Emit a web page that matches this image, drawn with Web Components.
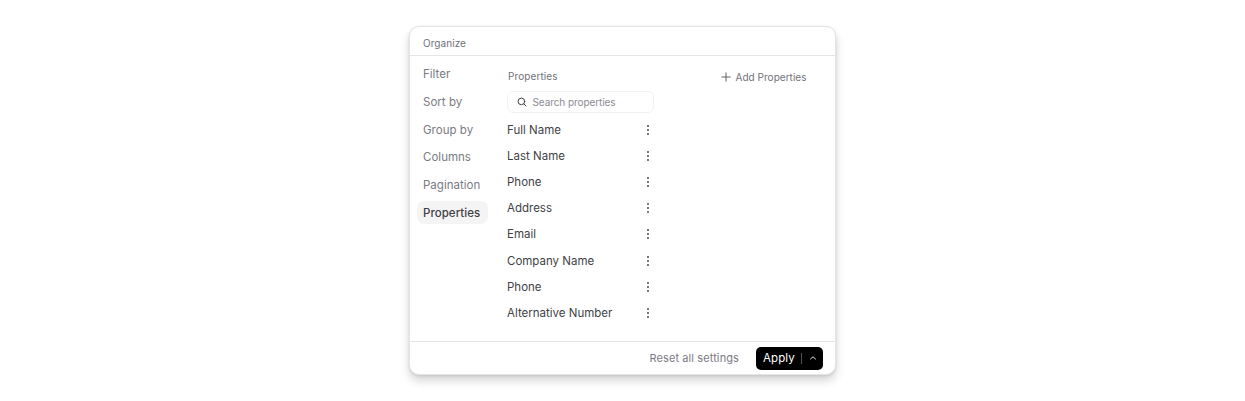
<!doctype html>
<html><head><meta charset="utf-8"><style>
html,body{margin:0;background:#fff;}
body{height:401px;overflow:hidden;font-family:Inter,"Liberation Sans",sans-serif;display:flex;justify-content:center;align-items:flex-start;padding-top:26px;box-sizing:border-box;}
</style></head><body>
<organize-panel>
  <side-item>Filter</side-item>
  <side-item>Sort by</side-item>
  <side-item>Group by</side-item>
  <side-item>Columns</side-item>
  <side-item>Pagination</side-item>
  <side-item active>Properties</side-item>
  <prop-row slot="rows">Full Name</prop-row>
  <prop-row slot="rows">Last Name</prop-row>
  <prop-row slot="rows">Phone</prop-row>
  <prop-row slot="rows">Address</prop-row>
  <prop-row slot="rows">Email</prop-row>
  <prop-row slot="rows">Company Name</prop-row>
  <prop-row slot="rows">Phone</prop-row>
  <prop-row slot="rows">Alternative Number</prop-row>
</organize-panel>
<script>
class SideItem extends HTMLElement{constructor(){super();this.attachShadow({mode:'open'}).innerHTML=`<style>
:host{display:flex;align-items:center;box-sizing:border-box;height:23px;padding:0 6px;border-radius:7px;font-size:11.5px;letter-spacing:.02px;color:#7a7a83;white-space:nowrap;}
:host([active]){background:#f4f4f5;color:#3f3f46;font-weight:500;letter-spacing:.05px;}
</style><slot></slot>`;}}
customElements.define('side-item',SideItem);
class PropRow extends HTMLElement{constructor(){super();this.attachShadow({mode:'open'}).innerHTML=`<style>
:host{display:flex;align-items:center;justify-content:space-between;height:26.16px;font-size:11.5px;letter-spacing:0;color:#3f3f46;white-space:nowrap;}
svg{display:block;margin-right:.5px;}
</style><slot></slot><svg width="12" height="12" viewBox="0 0 12 12" fill="#52525b"><circle cx="6" cy="2" r="1.05"/><circle cx="6" cy="6" r="1.05"/><circle cx="6" cy="10" r="1.05"/></svg>`;}}
customElements.define('prop-row',PropRow);
class OrganizePanel extends HTMLElement{constructor(){super();this.attachShadow({mode:'open'}).innerHTML=`<style>
:host{display:flex;flex-direction:column;box-sizing:border-box;width:427px;height:349px;background:#fff;border:1px solid #e4e4e7;border-radius:10px;box-shadow:0 6px 10px rgba(0,0,0,.16),0 1px 3px rgba(0,0,0,.1);overflow:hidden;}
header{flex:none;height:29px;box-sizing:border-box;padding:4px 13px 0;display:flex;align-items:center;border-bottom:1px solid #e4e4e7;font-size:10px;letter-spacing:.06px;color:#71717a;}
.body{flex:1;display:flex;min-height:0;}
nav{flex:none;width:71px;margin:6.5px 0 0 7px;display:flex;flex-direction:column;gap:4.8px;}
main{flex:none;width:147px;margin:0 0 0 19px;display:flex;flex-direction:column;padding-top:12.5px;}
.label{font-size:10px;letter-spacing:.1px;color:#71717a;padding-left:1px;height:15px;display:flex;align-items:center;}
.search{box-sizing:border-box;height:22px;margin-top:7px;border:1px solid #f2f2f4;border-radius:6px;display:flex;align-items:center;gap:5.5px;padding-left:9px;font-size:10px;letter-spacing:-.08px;color:#8a8a93;white-space:nowrap;}
.rows{margin-top:4.2px;display:flex;flex-direction:column;}
.add{margin:13px 0 0 66.5px;height:15px;display:flex;align-items:center;gap:5px;font-size:10px;letter-spacing:.03px;color:#71717a;white-space:nowrap;}
footer{flex:none;height:33px;box-sizing:border-box;border-top:1px solid #e4e4e7;display:flex;align-items:center;justify-content:flex-end;padding-right:12px;gap:17px;}
.reset{font-size:11px;letter-spacing:.1px;color:#7a7a83;white-space:nowrap;}
.apply{box-sizing:border-box;width:67px;height:23px;background:#000;color:#fff;border-radius:5px;display:flex;align-items:center;padding-left:7px;font-size:11.5px;letter-spacing:.1px;}
.sep{width:1px;height:11px;background:#52525b;margin-left:6.5px;}
.apply svg{margin-left:6px;display:block;}
</style>
<header>Organize</header>
<div class="body">
<nav><slot></slot></nav>
<main>
<div class="label">Properties</div>
<div class="search"><svg width="10" height="10" viewBox="0 0 10 10" fill="none" stroke="#3f3f46" stroke-width="1" stroke-linecap="round"><circle cx="4.4" cy="4.4" r="3.3"/><path d="M6.9 6.9 9 9"/></svg><span>Search properties</span></div>
<div class="rows"><slot name="rows"></slot></div>
</main>
<div class="add"><svg width="10" height="10" viewBox="0 0 10 10" fill="none" stroke="#52525b" stroke-width=".9" stroke-linecap="round"><path d="M5 .8v8.4M.8 5h8.4"/></svg><span>Add Properties</span></div>
</div>
<footer><span class="reset">Reset all settings</span><div class="apply"><span>Apply</span><i class="sep"></i><svg width="10" height="10" viewBox="0 0 10 10" fill="none" stroke="#e4e4e7" stroke-width="1" stroke-linecap="round" stroke-linejoin="round"><path d="M2.5 6 5 3.8 7.5 6"/></svg></div></footer>`;}}
customElements.define('organize-panel',OrganizePanel);
</script>
</body></html>
